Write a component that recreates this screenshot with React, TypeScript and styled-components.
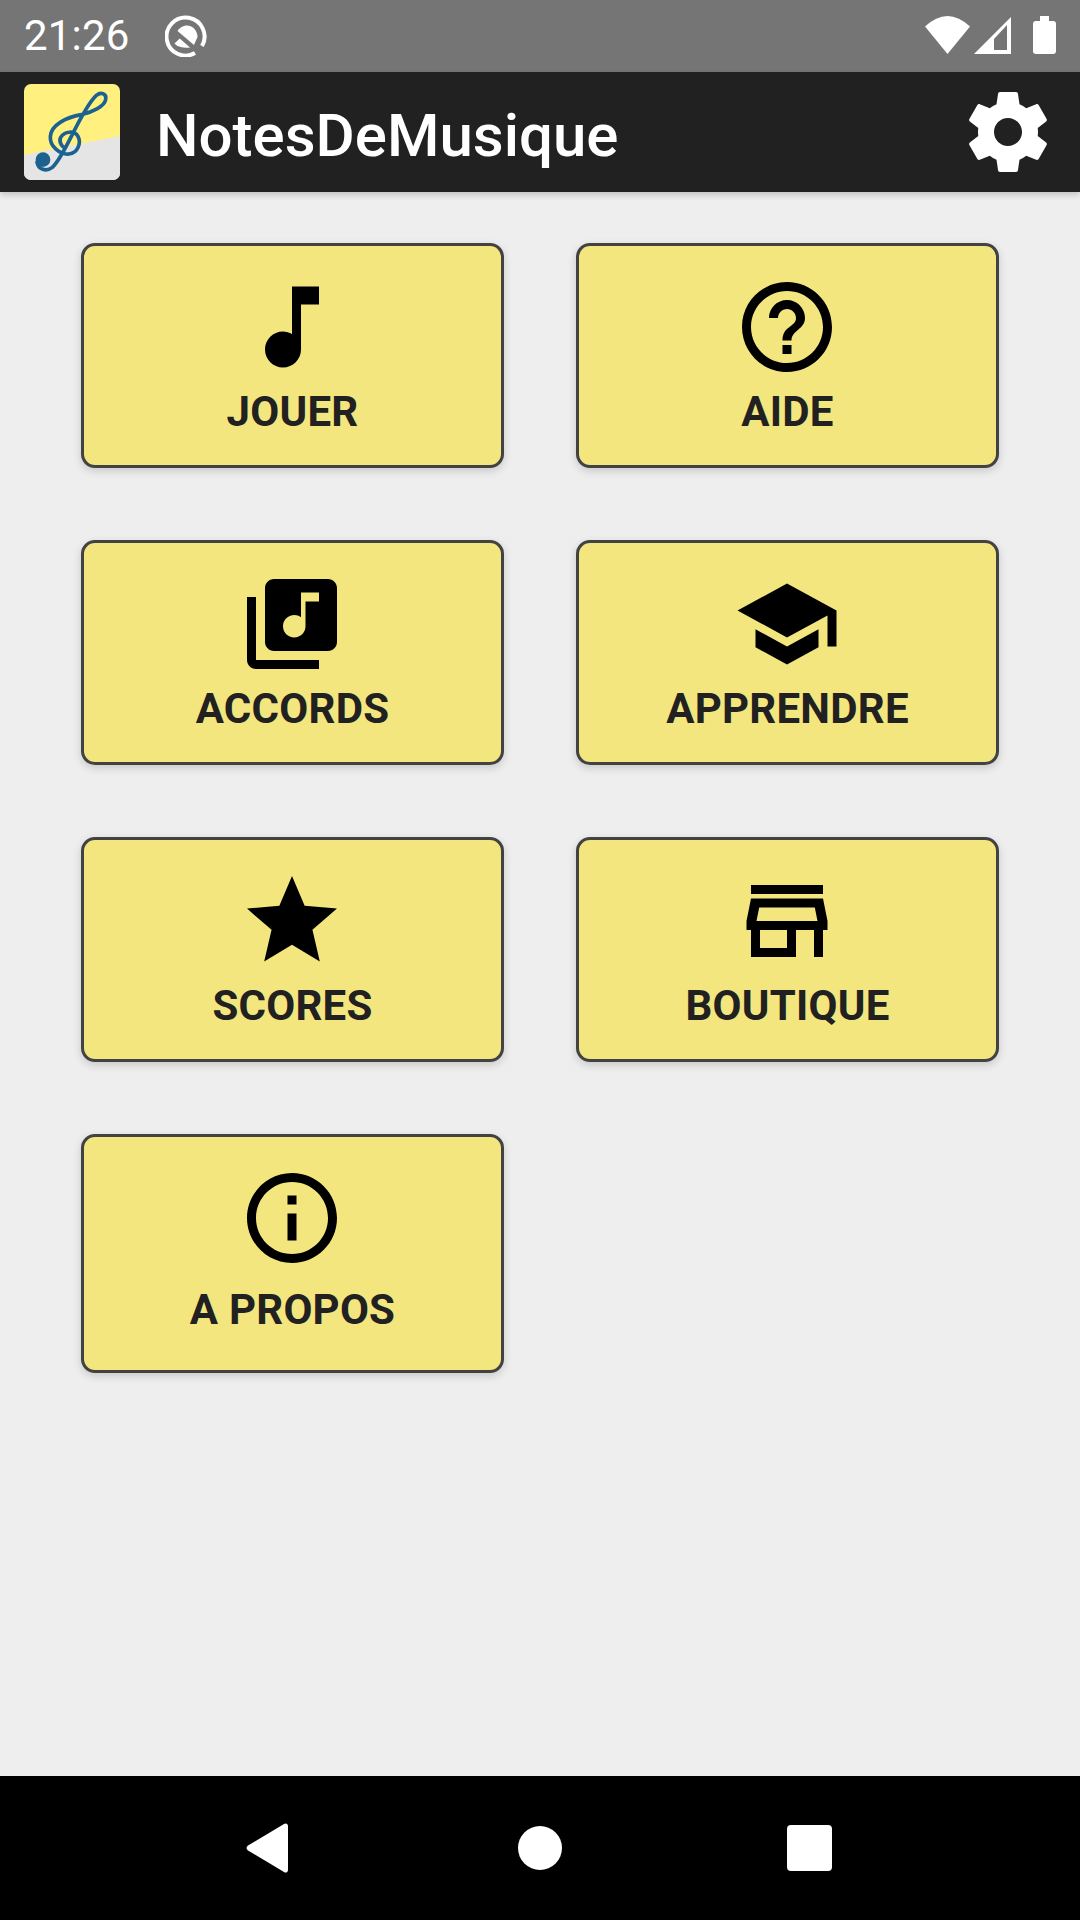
import React from "react";
import styled, { createGlobalStyle } from "styled-components";

const GlobalStyle = createGlobalStyle`
  html, body {
    margin: 0;
    padding: 0;
    background: #eeeeee;
  }
  * {
    box-sizing: border-box;
  }
`;

type MenuEntry = {
  label: string;
  icon: string;
  tall?: boolean;
};

const ICONS = {
  note: "M12 3v10.55c-.59-.34-1.27-.55-2-.55-2.21 0-4 1.79-4 4s1.79 4 4 4 4-1.79 4-4V7h4V3h-6z",
  help: "M11 18h2v-2h-2v2zm1-16C6.48 2 2 6.48 2 12s4.48 10 10 10 10-4.48 10-10S17.52 2 12 2zm0 18c-4.41 0-8-3.59-8-8s3.59-8 8-8 8 3.59 8 8-3.59 8-8 8zm0-14c-2.21 0-4 1.79-4 4h2c0-1.1.9-2 2-2s2 .9 2 2c0 2-3 1.75-3 5h2c0-2.25 3-2.5 3-5 0-2.21-1.79-4-4-4z",
  library: "M20 2H8c-1.1 0-2 .9-2 2v12c0 1.1.9 2 2 2h12c1.1 0 2-.9 2-2V4c0-1.1-.9-2-2-2zm-2 5h-3v5.5c0 1.38-1.12 2.5-2.5 2.5S10 13.88 10 12.5s1.12-2.5 2.5-2.5c.57 0 1.08.19 1.5.51V5h4v2zM4 6H2v14c0 1.1.9 2 2 2h14v-2H4V6z",
  school: "M5 13.18v4L12 21l7-3.82v-4L12 17l-7-3.82zM12 3L1 9l11 6 9-4.91V17h2V9L12 3z",
  star: "M12 17.27L18.18 21l-1.64-7.03L22 9.24l-7.19-.61L12 2 9.19 8.63 2 9.24l5.46 4.73L5.82 21z",
  store: "M20 4H4v2h16V4zm1 10v-2l-1-5H4l-1 5v2h1v6h10v-6h4v6h2v-6h1zm-9 4H6v-4h6v4zm-6.78-6l.6-3h12.36l.6 3H5.22z",
  info: "M11 7h2v2h-2zm0 4h2v6h-2zm1-9C6.48 2 2 6.48 2 12s4.48 10 10 10 10-4.48 10-10S17.52 2 12 2zm0 18c-4.41 0-8-3.59-8-8s3.59-8 8-8 8 3.59 8 8-3.59 8-8 8z",
  settings: "M19.43 12.98c.04-.32.07-.64.07-.98s-.03-.66-.07-.98l2.11-1.65c.19-.15.24-.42.12-.64l-2-3.46c-.12-.22-.39-.3-.61-.22l-2.49 1c-.52-.4-1.08-.73-1.69-.98l-.38-2.65C14.46 2.18 14.25 2 14 2h-4c-.25 0-.46.18-.49.42l-.38 2.65c-.61.25-1.17.59-1.69.98l-2.49-1c-.23-.09-.49 0-.61.22l-2 3.46c-.13.22-.07.49.12.64l2.11 1.65c-.04.32-.07.65-.07.98s.03.66.07.98l-2.11 1.65c-.19.15-.24.42-.12.64l2 3.46c.12.22.39.3.61.22l2.49-1c.52.4 1.08.73 1.69.98l.38 2.65c.03.24.24.42.49.42h4c.25 0 .46-.18.49-.42l.38-2.65c.61-.25 1.17-.59 1.69-.98l2.49 1c.23.09.49 0 .61-.22l2-3.46c.12-.22.07-.49-.12-.64l-2.11-1.65zM12 15.5c-1.93 0-3.5-1.57-3.5-3.5s1.57-3.5 3.5-3.5 3.5 1.57 3.5 3.5-1.57 3.5-3.5 3.5z",
};

const ENTRIES: MenuEntry[] = [
  { label: "JOUER", icon: ICONS.note },
  { label: "AIDE", icon: ICONS.help },
  { label: "ACCORDS", icon: ICONS.library },
  { label: "APPRENDRE", icon: ICONS.school },
  { label: "SCORES", icon: ICONS.star },
  { label: "BOUTIQUE", icon: ICONS.store },
  { label: "A PROPOS", icon: ICONS.info, tall: true },
];

function Logo() {
  return (
    <LogoBox>
      <svg width="96" height="96" viewBox="43 28 288 288">
        <polygon points="43,241 331,184 331,316 43,316" fill="#e5e5e5" />
        <path
          d="M82 262 C85 285 110 292 128 278 C145 262 165 225 185 185 C205 145 235 85 260 62 C275 50 292 58 288 75 C284 95 250 112 215 120 C170 128 125 150 122 185 C120 215 150 240 178 238 C205 235 215 205 205 185 C195 168 165 168 153 188 C147 200 155 215 165 220"
          fill="none"
          stroke="#1c6190"
          strokeWidth="11"
          strokeLinecap="round"
        />
        <circle cx="100" cy="255" r="22" fill="#1c6190" />
      </svg>
    </LogoBox>
  );
}

export default function App() {
  return (
    <>
      <GlobalStyle />
      <Screen>
        <StatusBar>
          <Clock>21:26</Clock>
          <BetaIcon width="42" height="42" viewBox="0 0 42 42">
            <path
              d="M30 38 A19 19 0 1 1 37 31"
              fill="none"
              stroke="#fff"
              strokeWidth="4"
            />
            <path
              d="M12.5 16 C15 12 19 10.5 22 10.5 C28 10.5 32.5 16 32.5 22 L29 30 Z"
              fill="#fff"
            />
            <path
              d="M14.7 23.5 L25 32.5 C20 33.5 13 32.5 9.5 28.5 Z"
              fill="#fff"
            />
          </BetaIcon>
          <StatusIcons>
            <svg width="45" height="38" viewBox="0 0 45 38">
              <path d="M0 10.5 Q22.5 -10.5 45 10.5 L22.5 38 Z" fill="#fff" />
            </svg>
            <svg width="37" height="37" viewBox="0 0 37 37">
              <path
                d="M37 0 V37 H0 Z M33 8 L20 22 V33 H33 Z"
                fill="#fff"
                fillRule="evenodd"
              />
            </svg>
            <Battery />
          </StatusIcons>
        </StatusBar>
        <Toolbar>
          <Logo />
          <Title>NotesDeMusique</Title>
          <SettingsIcon viewBox="0 0 24 24">
            <path d={ICONS.settings} />
          </SettingsIcon>
        </Toolbar>
        <Content>
          <MenuGrid>
            {ENTRIES.map((entry) => (
              <MenuButton key={entry.label} $tall={entry.tall}>
                <MenuIcon viewBox="0 0 24 24">
                  <path d={entry.icon} />
                </MenuIcon>
                <MenuLabel $tall={entry.tall}>{entry.label}</MenuLabel>
              </MenuButton>
            ))}
          </MenuGrid>
        </Content>
        <NavBar>
          <svg width="46" height="50" viewBox="0 0 46 50">
            <path
              d="M38 1 C40 -0.5 42 1 42 3 V47 C42 49 40 50.5 38 49 L2 27.5 C0 26 0 24 2 22.5 Z"
              fill="#fff"
            />
          </svg>
          <HomeDot />
          <RecentSquare />
        </NavBar>
      </Screen>
    </>
  );
}

const Screen = styled.div`
  display: flex;
  flex-direction: column;
  width: 1080px;
  height: 1920px;
  overflow: hidden;
  background: #eeeeee;
  font-family: Roboto, "Liberation Sans", sans-serif;
`;

const StatusBar = styled.div`
  display: flex;
  align-items: center;
  flex: none;
  height: 72px;
  padding: 0 24px;
  background: #757575;
  color: #ffffff;
`;

const Clock = styled.span`
  font-size: 42px;
  line-height: 72px;
  letter-spacing: 0.2px;
`;

const BetaIcon = styled.svg`
  margin-left: 35px;
`;

const StatusIcons = styled.div`
  display: flex;
  align-items: flex-end;
  align-self: flex-start;
  gap: 4px;
  margin-left: auto;
  padding-top: 16px;
`;

const Battery = styled.div`
  position: relative;
  width: 23px;
  height: 33px;
  margin-left: 18px;
  border-radius: 3px;
  background: #ffffff;

  &::before {
    content: "";
    position: absolute;
    top: -5px;
    left: 7px;
    width: 9px;
    height: 5px;
    background: #ffffff;
  }
`;

const Toolbar = styled.div`
  position: relative;
  display: flex;
  align-items: center;
  flex: none;
  height: 120px;
  padding: 0 24px;
  background: #212121;
  box-shadow: 0 3px 6px rgba(0, 0, 0, 0.18);
`;

const LogoBox = styled.div`
  display: flex;
  flex: none;
  width: 96px;
  height: 96px;
  overflow: hidden;
  border-radius: 7px;
  background: #fff080;
`;

const Title = styled.h1`
  margin: 0 0 0 36px;
  padding-top: 7px;
  font-size: 60px;
  font-weight: 500;
  color: #ffffff;
`;

const SettingsIcon = styled.svg`
  width: 96px;
  height: 96px;
  margin-left: auto;
  fill: #ffffff;
`;

const Content = styled.main`
  flex: 1;
  padding: 51px 0 0 81px;
`;

const MenuGrid = styled.div`
  display: grid;
  grid-template-columns: repeat(2, 423px);
  column-gap: 72px;
  row-gap: 72px;
  align-items: start;
`;

const MenuButton = styled.div<{ $tall?: boolean }>`
  display: flex;
  flex-direction: column;
  align-items: center;
  height: ${(p) => (p.$tall ? "239px" : "225px")};
  padding-top: 27px;
  border: 3px solid #424242;
  border-radius: 14px;
  background: #f3e67f;
  box-shadow: 0 3px 8px rgba(0, 0, 0, 0.16);
`;

const MenuIcon = styled.svg`
  flex: none;
  width: 108px;
  height: 108px;
  margin-right: 2px;
  fill: #000000;
`;

const MenuLabel = styled.span<{ $tall?: boolean }>`
  margin-top: ${(p) => (p.$tall ? "13px" : "6px")};
  font-size: 42px;
  font-weight: 700;
  line-height: 49px;
  letter-spacing: 0.25px;
  color: #212121;
`;

const NavBar = styled.nav`
  display: flex;
  align-items: center;
  gap: 225px;
  flex: none;
  height: 144px;
  padding-left: 246px;
  background: #000000;
`;

const HomeDot = styled.div`
  width: 44px;
  height: 44px;
  margin-left: 1px;
  border-radius: 50%;
  background: #ffffff;
`;

const RecentSquare = styled.div`
  width: 45px;
  height: 46px;
  border-radius: 4px;
  background: #ffffff;
`;
